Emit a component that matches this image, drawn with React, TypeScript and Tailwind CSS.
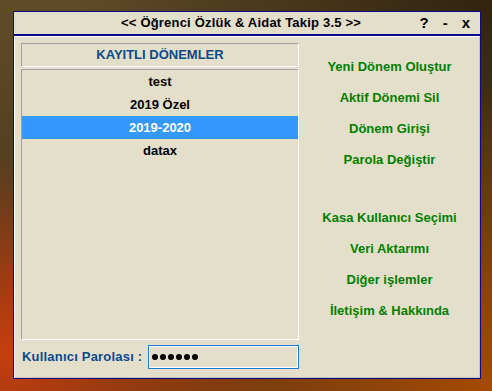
import React from 'react';

const DONEMLER = ['test', '2019 Özel', '2019-2020', 'datax'];
const SELECTED = '2019-2020';

const MENU_TOP = ['Yeni Dönem Oluştur', 'Aktif Dönemi Sil', 'Dönem Girişi', 'Parola Değiştir'];
const MENU_BOTTOM = ['Kasa Kullanıcı Seçimi', 'Veri Aktarımı', 'Diğer işlemler', 'İletişim & Hakkında'];

function MenuItem({ label }: { label: string }) {
  return (
    <div className="h-[31px] flex items-center justify-center text-[13px] font-bold text-[#008000] cursor-pointer">
      {label}
    </div>
  );
}

export default function App() {
  return (
    <div
      className="w-[492px] h-[391px] overflow-hidden pt-[11px] pl-[13px] bg-[#4e3a1c] bg-[image:radial-gradient(ellipse_at_0%_90%,#c63e0e_0%,rgba(198,62,14,0)_40%),radial-gradient(ellipse_at_100%_100%,#a44a06_0%,rgba(164,74,6,0)_55%),radial-gradient(ellipse_at_100%_0%,#33230f_0%,rgba(51,35,15,0)_60%),linear-gradient(to_bottom,#604b29_0%,#503c1d_55%,#5e3512_100%)]"
      style={{ fontFamily: '"Liberation Sans", Arial, sans-serif' }}
    >
      {/* Window */}
      <div className="w-[468px] h-[368px] border border-[#0a0a8a] bg-[#e4dfca] flex flex-col">
        {/* Title bar */}
        <div className="h-[24px] border-b-2 border-[#0a0a8a] flex items-center text-black">
          <div className="flex-1" />
          <div className="text-[13px] font-bold tracking-[0.2px] pr-[2px] whitespace-nowrap">
            &lt;&lt; Öğrenci Özlük &amp; Aidat Takip 3.5 &gt;&gt;
          </div>
          <div className="flex-1 flex justify-end items-center gap-[14px] mr-[10px] text-[15px] font-bold">
            <span>?</span>
            <span>-</span>
            <span>x</span>
          </div>
        </div>

        {/* Body */}
        <div className="flex-1 flex border-t border-l border-t-white border-l-white border-r border-b border-r-[#c4c2b6] border-b-[#c4c2b6]">
          {/* Left column */}
          <div className="w-[278px] ml-[6px] pt-[6px] flex flex-col">
            <div className="h-[24px] border border-t-[#a0a0a0] border-l-[#a0a0a0] border-b-white border-r-white flex items-center justify-center text-[13px] font-bold text-[#0b4a8a]">
              KAYITLI DÖNEMLER
            </div>
            <div className="h-[271px] mt-[2px] border border-t-[#a0a0a0] border-l-[#a0a0a0] border-b-white border-r-white flex flex-col">
              {DONEMLER.map((d) => (
                <div
                  key={d}
                  className={`h-[23px] flex items-center justify-center text-[13px] font-bold ${
                    d === SELECTED ? 'bg-[#3399ff] text-white' : 'text-black'
                  }`}
                >
                  {d}
                </div>
              ))}
            </div>
            <div className="mt-[5px] h-[24px] flex items-center justify-between pl-[1px]">
              <span className="text-[13px] font-bold tracking-[0.2px] text-[#0b4a8a] whitespace-nowrap">Kullanıcı Parolası :</span>
              <div className="w-[151px] h-[24px] border border-[#1a7ad4]">
                <div className="h-full border border-white flex items-center gap-[2px] pl-[2px]">
                  {Array.from({ length: 6 }).map((_, i) => (
                    <span key={i} className="w-[6px] h-[6px] rounded-full bg-black" />
                  ))}
                </div>
              </div>
            </div>
          </div>

          {/* Right column */}
          <div className="flex-1 pt-[14px] pl-[1px] flex flex-col">
            {MENU_TOP.map((m) => (
              <MenuItem key={m} label={m} />
            ))}
            <div className="h-[27px]" />
            {MENU_BOTTOM.map((m) => (
              <MenuItem key={m} label={m} />
            ))}
          </div>
        </div>
      </div>
    </div>
  );
}
